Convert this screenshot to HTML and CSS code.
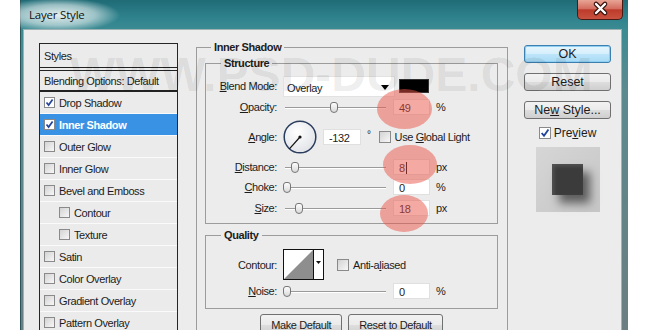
FILE: index.html
```html
<!doctype html>
<html lang="en">
<head>
	<meta charset="UTF-8">
	<title>Layer Style</title>
	<link rel="stylesheet" href="styles.css">
</head>
<body>
	<div class="window">
		<div class="titlebar">
			<span class="title">Layer Style</span>
			<span class="close">
				<svg width="44" height="18" viewBox="0 0 44 18">
					<path d="M18 4 L27 13 M27 4 L18 13" stroke="#3a1410" stroke-width="4.6" stroke-linecap="round"/>
					<path d="M18 4 L27 13 M27 4 L18 13" stroke="#fff" stroke-width="2.4" stroke-linecap="round"/>
				</svg>
			</span>
		</div>
		<div class="client">
			<ul class="styles">
				<li class="head">Styles</li>
				<li class="blend">Blending Options: Default</li>
				<li><span class="cb on"><svg viewBox="0 0 9 9"><path d="M1.5 4.5 L3.6 7 L7.6 1.4" fill="none" stroke="#24449a" stroke-width="1.7"/></svg></span>Drop Shadow</li>
				<li class="sel"><span class="cb on"><svg viewBox="0 0 9 9"><path d="M1.5 4.5 L3.6 7 L7.6 1.4" fill="none" stroke="#24449a" stroke-width="1.7"/></svg></span>Inner Shadow</li>
				<li><span class="cb"></span>Outer Glow</li>
				<li><span class="cb"></span>Inner Glow</li>
				<li><span class="cb"></span>Bevel and Emboss</li>
				<li class="sub"><span class="cb"></span>Contour</li>
				<li class="sub"><span class="cb"></span>Texture</li>
				<li><span class="cb"></span>Satin</li>
				<li><span class="cb"></span>Color Overlay</li>
				<li><span class="cb"></span>Gradient Overlay</li>
				<li><span class="cb"></span>Pattern Overlay</li>
			</ul>

			<fieldset class="group main">
				<legend>Inner Shadow</legend>
				<fieldset class="group inner structure">
					<legend>Structure</legend>
					<div class="row blendrow">
						<span class="lbl"><u>B</u>lend Mode:</span>
						<div class="select"><span>Overlay</span><i class="caret"></i></div>
						<div class="color"></div>
					</div>
					<div class="row">
						<span class="lbl"><u>O</u>pacity:</span>
						<div class="slider"><span class="thumb" style="left:47px"></span></div>
						<div class="field">49</div>
						<span class="unit">%</span>
					</div>
					<div class="row anglerow">
						<span class="lbl"><u>A</u>ngle:</span>
						<svg class="dial" width="34" height="34" viewBox="0 0 34 34">
							<defs>
								<radialGradient id="dialfill" cx="40%" cy="35%" r="65%">
									<stop offset="0" stop-color="#ffffff"/>
									<stop offset="1" stop-color="#e2e4e8"/>
								</radialGradient>
							</defs>
							<circle cx="17" cy="17" r="15.8" fill="url(#dialfill)" stroke="#2b3d5e" stroke-width="1.5"/>
							<line x1="17" y1="17" x2="6.4" y2="28.8" stroke="#111" stroke-width="1.2"/>
							<circle cx="17" cy="17" r="1.6" fill="#111"/>
						</svg>
						<div class="field wide">-132</div>
						<span class="deg">°</span>
						<span class="cb big"></span>
						<span class="cbtext">Use <u>G</u>lobal Light</span>
					</div>
					<div class="row tight">
						<span class="lbl"><u>D</u>istance:</span>
						<div class="slider"><span class="thumb" style="left:8px"></span></div>
						<div class="field">8<i class="cursor"></i></div>
						<span class="unit">px</span>
					</div>
					<div class="row">
						<span class="lbl"><u>C</u>hoke:</span>
						<div class="slider"><span class="thumb" style="left:0px"></span></div>
						<div class="field">0</div>
						<span class="unit">%</span>
					</div>
					<div class="row sizerow">
						<span class="lbl"><u>S</u>ize:</span>
						<div class="slider"><span class="thumb" style="left:12px"></span></div>
						<div class="field">18</div>
						<span class="unit">px</span>
					</div>
				</fieldset>

				<fieldset class="group inner quality">
					<legend>Quality</legend>
					<div class="row contourrow">
						<span class="lbl">Contour:</span>
						<svg class="contour" width="41" height="31" viewBox="0 0 41 31">
							<rect x="0.5" y="0.5" width="40" height="30" fill="#fff" stroke="#111"/>
							<polygon points="1,30 30,1 30,30" fill="#8e8e8e"/>
							<line x1="30.5" y1="0" x2="30.5" y2="31" stroke="#111"/>
							<polygon points="33,12 38,12 35.5,15" fill="#111"/>
						</svg>
						<span class="cb big aa"></span>
						<span class="cbtext">Anti-a<u>l</u>iased</span>
					</div>
					<div class="row">
						<span class="lbl"><u>N</u>oise:</span>
						<div class="slider"><span class="thumb" style="left:0px"></span></div>
						<div class="field">0</div>
						<span class="unit">%</span>
					</div>
				</fieldset>

				<div class="defaults">
					<button class="btn">Make Default</button>
					<button class="btn">Reset to Default</button>
				</div>
			</fieldset>

			<div class="side">
				<button class="btn big ok">OK</button>
				<button class="btn big">Reset</button>
				<button class="btn big">Ne<u>w</u> Style...</button>
				<div class="preview">
					<span class="cb big on"><svg viewBox="0 0 9 9"><path d="M1.5 4.5 L3.6 7 L7.6 1.4" fill="none" stroke="#24449a" stroke-width="1.7"/></svg></span>
					<span>Pre<u>v</u>iew</span>
				</div>
				<div class="swatch"><div class="square"></div></div>
			</div>

			<div class="watermark">WWW.PSD-DUDE.COM</div>
			<div class="mark m1"></div>
			<div class="mark m2"></div>
			<div class="mark m3"></div>
		</div>
	</div>
</body>
</html>
```

FILE: styles.css
```css
body,html{margin: 0;padding: 0;}
body{width: 650px;height: 330px;overflow: hidden;background: #fff;font-family: "Liberation Sans", Arial, sans-serif;font-size: 11px;letter-spacing: -0.4px;color: #1c1c1c;}
u{text-decoration: underline;}

/* window frame */
.window{margin-left: 20px;width: 608px;height: 345px;box-sizing: border-box;padding: 0 6px 0 2px;display: flex;flex-direction: column;border-left: 1px solid #2c555b;background: linear-gradient(#1f6b76, #2f838d 18px, #3c8b93 30px, #5b8a8f 90px, #6b7e81 330px);}
.titlebar{height: 29px;flex: none;display: flex;justify-content: space-between;align-items: flex-start;margin: 0 -1px 0 -3px;padding-left: 9px;background: radial-gradient(ellipse 62px 17px at 38px 15px, rgba(232,241,241,0.97), rgba(232,241,241,0.6) 60%, rgba(232,241,241,0));}
.title{line-height: 29px;font-family: "Open Sans", "Liberation Sans", sans-serif;font-size: 11.5px;letter-spacing: -0.2px;color: #111;}
.close{width: 46px;height: 20px;box-sizing: border-box;border: 1px solid #4a1a15;border-top: none;border-radius: 0 0 5px 5px;background: linear-gradient(#e9a495, #d36e60 45%, #bd3b2b 52%, #c9523f);display: flex;}

.client{flex: 1;position: relative;display: flex;align-items: flex-start;padding: 11px 0 0 15px;background: #ececec;border: 1px solid #9fb1b3;}

/* styles list */
.styles{margin: 2px 0 0;padding: 0;list-style: none;width: 139px;flex: none;box-sizing: border-box;border: 1px solid #262626;border-bottom: none;background: #ebebeb;}
.styles li{height: 21px;border-bottom: 1px solid #fafafa;padding-left: 4px;display: flex;align-items: center;}
.styles .head{height: 23px;border-bottom: 4px double #222;}
.styles .blend{height: 19px;border-bottom: 2px solid #222;}
.styles .sub{padding-left: 19px;}
.styles .sel{background: #3a92e4;color: #fff;font-weight: bold;}

.cb{width: 11px;height: 11px;box-sizing: border-box;border: 1px solid #8a8a8a;background: linear-gradient(135deg, #d3d3d3, #f7f7f7);margin-right: 4px;flex: none;display: flex;align-items: center;justify-content: center;}
.cb.on{background: #fff;}
.cb svg{width: 9px;height: 9px;}
.cb.big{width: 12px;height: 12px;margin-right: 3px;}
.cb.big svg{width: 10px;height: 10px;}

/* group boxes */
.group{margin: 0;padding: 3px 9px 0 8px;border: 1px solid #9c9c9c;min-width: 0;}
.group legend{padding: 0 3px;margin-left: 6px;font-weight: bold;line-height: 13px;}
.main{width: 312px;flex: none;box-sizing: border-box;margin-left: 18px;padding-bottom: 10px;}
.inner{padding: 5px 0 5px 0;}
.inner legend{margin-left: 15px;}
.quality{margin-top: 5px;padding: 6px 0 7px 0;}

.row{display: flex;align-items: center;height: 20px;}
.blendrow{height: 22px;}
.anglerow{height: 36px;margin-top: 2px;}
.tight{margin-top: 2px;}
.sizerow{margin-top: 1px;}
.contourrow{height: 33px;}
.lbl{width: 71px;flex: none;text-align: right;margin-right: 6px;}

.select{width: 112px;height: 21px;margin-top: 1px;box-sizing: border-box;flex: none;background: #fff;border: 1px solid #e2e2e2;display: flex;align-items: center;justify-content: space-between;padding: 2px 5px 0 3px;}
.caret{width: 0;height: 0;border-top: 5px solid #000;border-left: 4px solid transparent;border-right: 4px solid transparent;}
.color{width: 30px;height: 14px;margin-left: 4px;box-sizing: border-box;background: #000;border: 1px solid #333;}

.slider{width: 103px;height: 11px;flex: none;position: relative;}
.slider:before{content: "";position: absolute;left: 2px;right: 0;top: 5px;height: 1px;background: #9a9a9a;box-shadow: 0 1px 0 #fff;}
.thumb{position: absolute;top: 0;width: 8px;height: 11px;box-sizing: border-box;border: 1px solid #767676;border-radius: 3px 3px 4px 4px;background: linear-gradient(#fdfdfd, #d9d9d9);}

.field{width: 37px;height: 16px;flex: none;box-sizing: border-box;margin-left: 7px;background: #fff;border: 1px solid #e0e0e0;padding: 1px 0 0 5px;line-height: 14px;display: flex;align-items: center;}
.field.wide{width: 38px;margin-left: 6px;}
.cursor{display: inline-block;width: 1px;height: 12px;background: #000;margin-left: 1px;}
.unit{margin-left: 6px;}
.deg{align-self: flex-start;margin: 10px 8px 0 6px;font-size: 10px;}
.dial{flex: none;}
.contour{flex: none;}
.aa{margin-left: 13px;}
.cbtext{margin-left: 1px;}

/* buttons */
.btn{height: 22px;padding: 0 10px;margin: 0;font-family: inherit;font-size: 11px;letter-spacing: -0.4px;color: #1c1c1c;border: 1px solid #707070;border-radius: 3px;background: linear-gradient(#f2f2f2, #ebebeb 48%, #dddddd 52%, #cfcfcf);}
.defaults{display: flex;justify-content: center;gap: 6px;margin-top: 5px;}

.side{width: 87px;flex: none;margin: 4px 0 0 16px;display: flex;flex-direction: column;align-items: center;}
.btn.big{width: 87px;height: 18px;padding: 0;margin-bottom: 10px;font-size: 12.5px;letter-spacing: 0;line-height: 15px;}
.btn.big:nth-child(3){margin-bottom: 0;}
.btn.ok{border-color: #3c7fb1;background: linear-gradient(#e6f5fd, #d6effc 48%, #bde5fa 52%, #a8daf5);box-shadow: inset 0 0 0 1px #8fd0f2;}
.preview{display: flex;align-items: center;margin-top: 8px;height: 12px;font-size: 12px;letter-spacing: 0;}
.swatch{width: 64px;height: 65px;margin-top: 8px;background: linear-gradient(135deg, #d6d6d6, #c6c6c6);display: flex;align-items: center;justify-content: center;}
.square{width: 31px;height: 31px;background: #3b3b3b;box-shadow: inset 2px 2px 4px #555, 7px 8px 9px rgba(0,0,0,0.55);}

/* overlays */
.watermark{position: absolute;left: 46px;top: 21px;font: bold 48px/48px "Liberation Sans", Arial, sans-serif;letter-spacing: 0;color: rgba(0,0,0,0.08);white-space: nowrap;pointer-events: none;}
.mark{position: absolute;border-radius: 50%;background: rgba(235,83,71,0.5);}
.m1{left: 353px;top: 59px;width: 55px;height: 40px;}
.m2{left: 359px;top: 115px;width: 54px;height: 39px;}
.m3{left: 356px;top: 165px;width: 48px;height: 37px;}
```
